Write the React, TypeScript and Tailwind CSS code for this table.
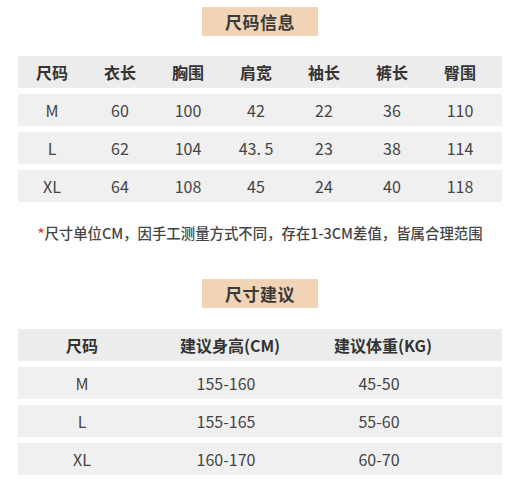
const font = { fontFamily: '"Noto Sans CJK SC", "Noto Sans", sans-serif' };

const sizeHead = ["尺码", "衣长", "胸围", "肩宽", "袖长", "裤长", "臀围"];
const sizeRows = [
  ["M", "60", "100", "42", "22", "36", "110"],
  ["L", "62", "104", "43. 5", "23", "38", "114"],
  ["XL", "64", "108", "45", "24", "40", "118"],
];

const adviceHead = ["尺码", "建议身高(CM)", "建议体重(KG)"];
const adviceRows = [
  ["M", "155-160", "45-50"],
  ["L", "155-165", "55-60"],
  ["XL", "160-170", "60-70"],
];

const Title = ({ text }: { text: string }) => (
  <div className="flex justify-center">
    <div className="w-[116px] h-[29px] bg-[#f1d4b5] flex items-center justify-center text-[17px] font-bold text-[#3a3a3a] tracking-[0.5px]">
      {text}
    </div>
  </div>
);

const App = () => {
  return (
    <div className="w-[520px] h-[482px] bg-white pt-[7px] overflow-hidden" style={font}>
      <Title text="尺码信息" />

      <div className="mx-[18px] mt-[20px] flex flex-col gap-[6px]">
        <div className="h-[32px] bg-[#ececec] grid grid-cols-[68px_68px_68px_68px_68px_68px_68px] items-center text-[16px] font-bold text-[#333]">
          {sizeHead.map((h) => (
            <div key={h} className="text-center">{h}</div>
          ))}
        </div>
        {sizeRows.map((row) => (
          <div key={row[0]} className="h-[32px] bg-[#f0f0f0] grid grid-cols-[68px_68px_68px_68px_68px_68px_68px] items-center text-[16px] text-[#444]">
            {row.map((c, i) => (
              <div key={i} className="text-center">{c}</div>
            ))}
          </div>
        ))}
      </div>

      <p className="mt-[21px] text-center text-[14.4px] leading-[20px] font-medium text-[#444]">
        <span className="text-[#e53935]">*</span>尺寸单位CM，因手工测量方式不同，存在1-3CM差值，皆属合理范围
      </p>

      <div className="mt-[36px]">
        <Title text="尺寸建议" />
      </div>

      <div className="mx-[18px] mt-[21px] flex flex-col gap-[6px]">
        <div className="h-[32px] bg-[#ececec] grid grid-cols-[128px_168px_138px] items-center text-[16px] font-bold text-[#333]">
          {adviceHead.map((h) => (
            <div key={h} className="text-center">{h}</div>
          ))}
        </div>
        {adviceRows.map((row) => (
          <div key={row[0]} className="h-[32px] bg-[#f0f0f0] grid grid-cols-[128px_160px_146px] items-center text-[16px] text-[#444]">
            {row.map((c, i) => (
              <div key={i} className="text-center">{c}</div>
            ))}
          </div>
        ))}
      </div>
    </div>
  );
};

export default App;
